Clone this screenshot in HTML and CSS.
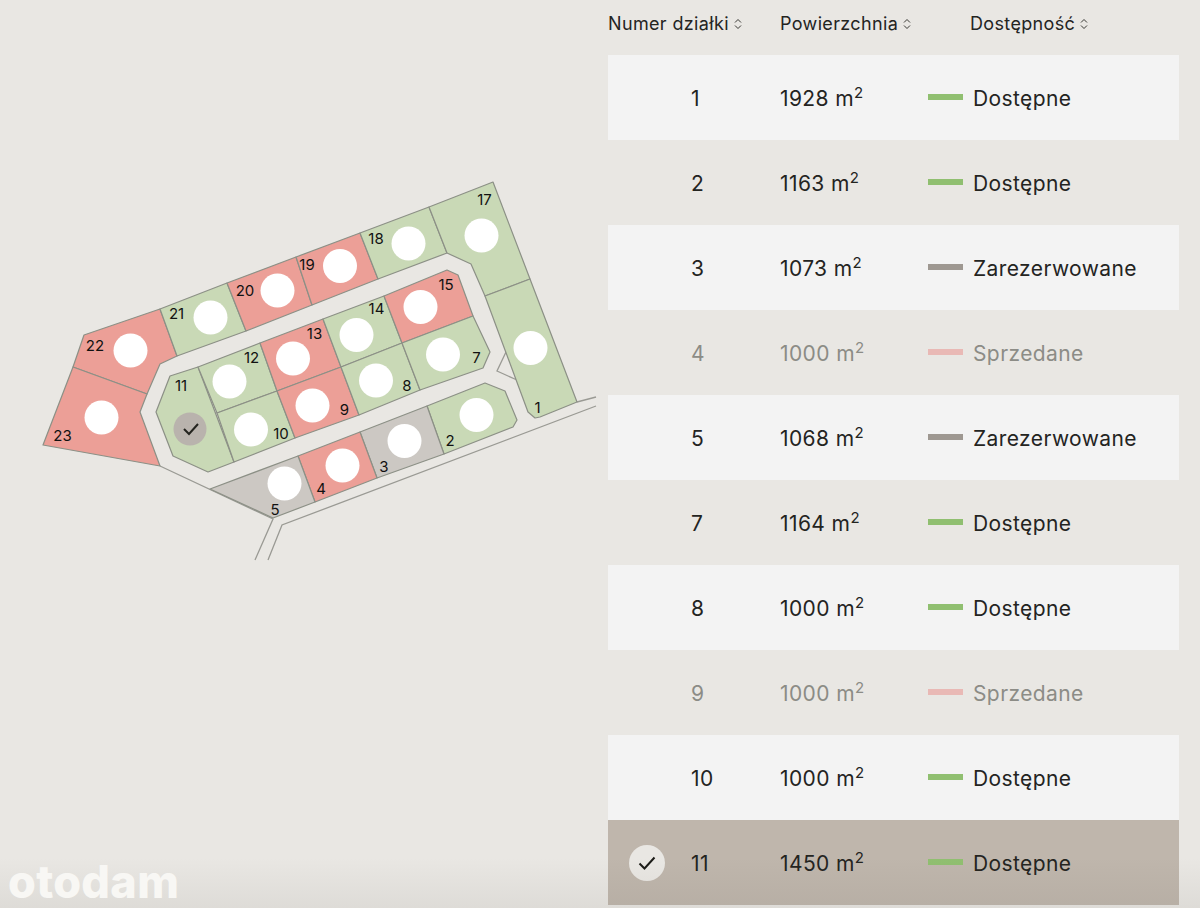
FILE: index.html
```html
<!DOCTYPE html>
<html lang="pl">
<head>
<meta charset="utf-8">
<title>Plan działek</title>
<link rel="stylesheet" href="styles.css">
</head>
<body>
<main class="page">
  <section class="map">
    <svg class="plan" viewBox="0 0 608 908" width="608" height="908">
      <g class="roads">
        <polyline points="160,466 273,519 255,560"/>
        <polyline points="596,406 282,525 268,560"/>
        <polyline points="577,402 596,397"/>
        <polyline points="506,352 497,371 517,380"/>
      </g>
      <g class="lots">
        <polygon class="sold" points="84,335 160,309 177,356 160,364 147,394 73,367"/>
        <polygon class="sold" points="73,367 147,394 140,412 160,466 43,445"/>
        <polygon class="free" points="160,309 227,283 246,331 177,356"/>
        <polygon class="sold" points="227,283 296,257 312,305 246,331"/>
        <polygon class="sold" points="296,257 360,233 378,279 312,305"/>
        <polygon class="free" points="360,233 429,207 447,253 378,279"/>
        <polygon class="free" points="429,207 493,182 530,279 485,296 471,264 447,253"/>
        <polygon class="free" points="485,296 530,279 577,402 540,417 535,418 528,412"/>
        <polygon class="free" points="427,406 485,383 505,391 517,420 513,427 444,454"/>
        <polygon class="held" points="360,432 427,406 444,454 377,478"/>
        <polygon class="sold" points="298,456 360,432 377,478 315,502"/>
        <polygon class="held" points="210,489 298,456 315,502 273,518"/>
        <polygon class="free" points="170,376 198,367 234,462 208,472 173,456 156,412"/>
        <polygon class="free" points="198,367 260,343 277,391 217,413"/>
        <polygon class="free" points="217,413 277,391 295,438 234,462"/>
        <polygon class="sold" points="260,343 323,319 341,367 277,391"/>
        <polygon class="sold" points="277,391 341,367 359,415 295,438"/>
        <polygon class="free" points="323,319 384,296 402,343 341,367"/>
        <polygon class="free" points="341,367 402,343 420,390 359,415"/>
        <polygon class="sold" points="384,296 447,270 458,275 473,316 402,343"/>
        <polygon class="free" points="402,343 473,316 490,352 483,368 420,390"/>
      </g>
      <g class="pins">
        <circle cx="130.500" cy="350.500" r="17"/><circle cx="101.500" cy="417.500" r="17"/>
        <circle cx="210.500" cy="317.500" r="17"/><circle cx="277.500" cy="290.500" r="17"/>
        <circle cx="340" cy="266" r="17"/><circle cx="408.500" cy="243.500" r="17"/>
        <circle cx="481.500" cy="235.500" r="17"/><circle cx="530.500" cy="348" r="17"/>
        <circle cx="420.500" cy="307" r="17"/><circle cx="356.500" cy="335" r="17"/>
        <circle cx="293" cy="358.500" r="17"/><circle cx="229.500" cy="381.500" r="17"/>
        <circle cx="443" cy="354.500" r="17"/><circle cx="376" cy="380.500" r="17"/>
        <circle cx="312.500" cy="405.500" r="17"/><circle cx="251" cy="429.500" r="17"/>
        <circle cx="476.500" cy="415" r="17"/><circle cx="404.500" cy="441" r="17"/>
        <circle cx="342.500" cy="465.500" r="17"/><circle cx="284.500" cy="483.500" r="17"/>
      </g>
      <circle class="pin-on" cx="190" cy="429" r="16.5"/>
      <path class="tick" d="M184 429l5 5 9-10"/>
      <g class="nums">
        <text x="484.500" y="199">17</text><text x="376" y="238.500">18</text>
        <text x="307" y="264">19</text><text x="245" y="290">20</text>
        <text x="176.500" y="313">21</text><text x="95" y="345">22</text>
        <text x="62.500" y="435">23</text><text x="181" y="385">11</text>
        <text x="251.500" y="357">12</text><text x="314.500" y="333">13</text>
        <text x="376.500" y="308">14</text><text x="446" y="284">15</text>
        <text x="476.500" y="357">7</text><text x="407" y="385">8</text>
        <text x="344.500" y="409">9</text><text x="281" y="433.500">10</text>
        <text x="537.500" y="407">1</text><text x="450" y="440">2</text>
        <text x="384" y="466">3</text><text x="321" y="488">4</text>
        <text x="275" y="509.500">5</text>
      </g>
    </svg>
  </section>

  <section class="list">
    <header class="head">
      <div class="h h-num">Numer działki <svg class="sort" viewBox="0 0 10 12" width="10" height="12"><path d="M2 4.500l3-3 3 3M2 7.500l3 3 3-3"/></svg></div>
      <div class="h h-area">Powierzchnia <svg class="sort" viewBox="0 0 10 12" width="10" height="12"><path d="M2 4.500l3-3 3 3M2 7.500l3 3 3-3"/></svg></div>
      <div class="h h-state">Dostępność <svg class="sort" viewBox="0 0 10 12" width="10" height="12"><path d="M2 4.500l3-3 3 3M2 7.500l3 3 3-3"/></svg></div>
    </header>

    <div class="row light"><span class="mark"></span><span class="num">1</span><span class="area">1928 m<sup>2</sup></span><span class="bar green"></span><span class="state">Dostępne</span></div>
    <div class="row"><span class="mark"></span><span class="num">2</span><span class="area">1163 m<sup>2</sup></span><span class="bar green"></span><span class="state">Dostępne</span></div>
    <div class="row light"><span class="mark"></span><span class="num">3</span><span class="area">1073 m<sup>2</sup></span><span class="bar grey"></span><span class="state">Zarezerwowane</span></div>
    <div class="row faded"><span class="mark"></span><span class="num">4</span><span class="area">1000 m<sup>2</sup></span><span class="bar pink"></span><span class="state">Sprzedane</span></div>
    <div class="row light"><span class="mark"></span><span class="num">5</span><span class="area">1068 m<sup>2</sup></span><span class="bar grey"></span><span class="state">Zarezerwowane</span></div>
    <div class="row"><span class="mark"></span><span class="num">7</span><span class="area">1164 m<sup>2</sup></span><span class="bar green"></span><span class="state">Dostępne</span></div>
    <div class="row light"><span class="mark"></span><span class="num">8</span><span class="area">1000 m<sup>2</sup></span><span class="bar green"></span><span class="state">Dostępne</span></div>
    <div class="row faded"><span class="mark"></span><span class="num">9</span><span class="area">1000 m<sup>2</sup></span><span class="bar pink"></span><span class="state">Sprzedane</span></div>
    <div class="row light"><span class="mark"></span><span class="num">10</span><span class="area">1000 m<sup>2</sup></span><span class="bar green"></span><span class="state">Dostępne</span></div>
    <div class="row chosen">
      <span class="mark"><svg class="check" viewBox="0 0 36 36" width="36" height="36"><circle cx="18" cy="18" r="18"/><path d="M10.500 18.500l5 5 10-11"/></svg></span>
      <span class="num">11</span><span class="area">1450 m<sup>2</sup></span><span class="bar green"></span><span class="state">Dostępne</span>
    </div>
  </section>

  <div class="shade"></div>
  <div class="brand">otodam</div>
</main>
</body>
</html>
```
FILE: styles.css
```css
* { box-sizing: border-box; }
html, body { margin: 0; height: 100%; }
body {
  background: #e9e7e3;
  color: #24241f;
  font-family: "Inter", "Liberation Sans", sans-serif;
  overflow: hidden;
}
.page {
  position: relative;
  display: flex;
  width: 1200px;
  height: 908px;
  overflow: hidden;
}
.map { width: 608px; flex: none; }
.plan { display: block; }
.roads polyline { fill: none; stroke: #9a9a94; stroke-width: 1.300; }
.lots polygon { stroke: #8c9086; stroke-width: 1.200; stroke-linejoin: round; }
.free { fill: #c9d9b6; }
.sold { fill: #ec9f97; }
.held { fill: #ccc8c3; }
.pins circle { fill: #fff; }
.pin-on { fill: #b9b3ad; }
.tick { fill: none; stroke: #24241f; stroke-width: 2; }
.nums text {
  font-size: 15px;
  fill: #111;
  text-anchor: middle;
  dominant-baseline: central;
}
.list { width: 571px; flex: none; }
.head {
  display: flex;
  align-items: center;
  height: 55px;
  padding-bottom: 8px;
  font-size: 18px;
  letter-spacing: .35px;
}
.h { display: flex; align-items: center; gap: 4px; white-space: nowrap; }
.h-num { width: 172px; }
.h-area { width: 190px; }
.sort { fill: none; stroke: #24241f; stroke-width: .9; }
.row {
  display: flex;
  align-items: center;
  height: 85px;
  padding-top: 1px;
  font-size: 21px;
  letter-spacing: .4px;
}
.light { background: #f3f3f3; }
.chosen { background: #bfb6ac; }
.faded { color: #8c8c86; }
.mark { display: flex; width: 83px; padding-left: 21px; margin-top: -1px; flex: none; }
.num { width: 89px; flex: none; }
.area { width: 148px; flex: none; white-space: nowrap; }
.area sup { font-size: 15px; line-height: 0; vertical-align: 8px; }
.bar { width: 35px; height: 6px; margin-top: -2px; margin-right: 10px; flex: none; }
.green { background: #90bf70; }
.grey { background: #9e9891; }
.pink { background: #e9b9b5; }
.check circle { fill: #e9e7e3; }
.check path { fill: none; stroke: #1c1c18; stroke-width: 2; }
.shade {
  position: absolute;
  left: 0;
  right: 0;
  bottom: 0;
  height: 50px;
  background: linear-gradient(rgba(90, 85, 78, 0), rgba(90, 85, 78, .08));
}
.brand {
  position: absolute;
  left: 8px;
  bottom: 2px;
  color: #f8f7f4;
  font-size: 45px;
  font-weight: 800;
  letter-spacing: .3px;
  line-height: 48px;
}
```
